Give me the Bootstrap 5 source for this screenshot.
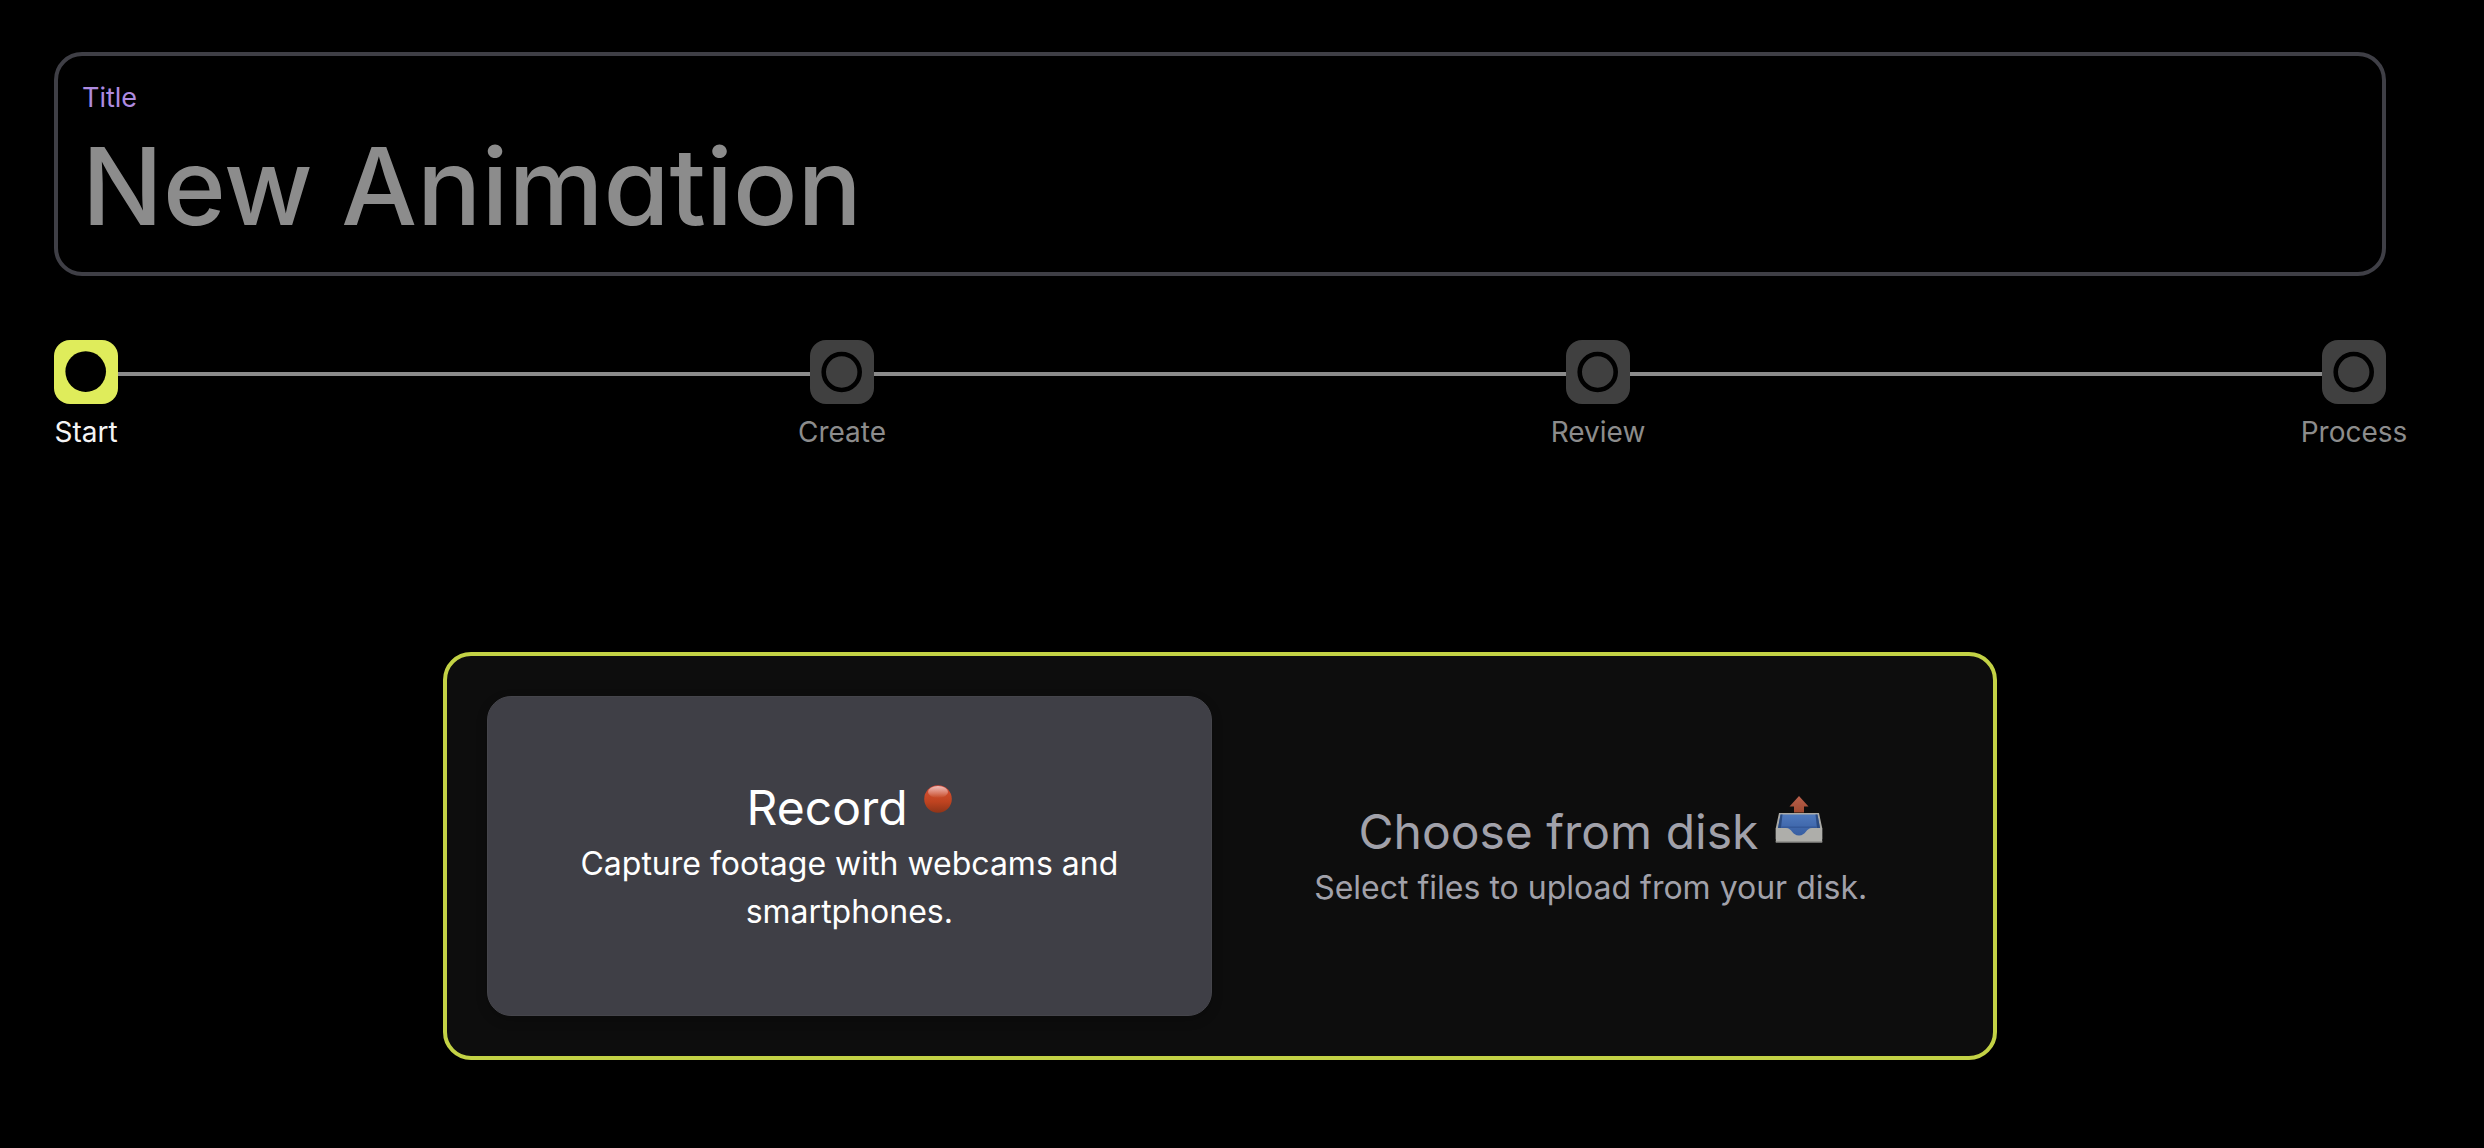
<!DOCTYPE html>
<html lang="en">
<head>
<meta charset="utf-8">
<meta name="viewport" content="width=device-width, initial-scale=1">
<title>New Animation</title>
<link href="https://cdn.jsdelivr.net/npm/bootstrap@5.3.0/dist/css/bootstrap.min.css" rel="stylesheet">
<style>
  body { background: #000; color: #fff; font-family: Inter, "Liberation Sans", sans-serif; font-size: 28px; line-height: 40px; }
  .page-wrap { padding: 52px 98px 88px 54px; }
  .title-field { border: 4px solid #3f3f46; border-radius: 28px; padding: 22px 24px 18px; }
  .title-field label { color: #ae8be0; font-size: 27px; }
  .title-input { display: block; width: 100%; border: 0; padding: 0; background: transparent; color: #fff; outline: 0; font-size: 107px; font-weight: 500; line-height: 136px; height: 136px; font-feature-settings: "cv11"; }
  .title-input::placeholder { color: #8c8c8c; opacity: 1; }
  .stepper { margin-top: 64px; }
  .step-item { width: 64px; gap: 8px; color: #8c8c8c; white-space: nowrap; }
  .step-item.current { color: #f4f4f5; }
  .step-box { width: 64px; height: 64px; border-radius: 16px; background: #404040; }
  .current .step-box { background: #dfec5b; }
  .step-line { height: 4px; margin-top: 32px; background: #8c8c8c; }
  .source-panel { margin-top: 200px; gap: 16px; padding: 40px; border: 4px solid #c3d245; border-radius: 28px; background: #0d0d0d; }
  .source-tab { flex: 1 1 0; height: 320px; padding: 0 80px; border: 1px solid transparent; border-radius: 24px; background: transparent; color: #a1a1aa; font-size: 32px; line-height: 48px; }
  .source-tab.selected { color: #fff; background: #3f3f46; border-color: #45454b; box-shadow: 0 4px 12px rgba(0, 0, 0, .2); }
  .source-name { font-size: 48px; line-height: 64px; }
  .source-icon { height: 48px; margin-top: -8px; margin-left: 3px; vertical-align: 6px; }
</style>
</head>
<body>
<main class="page-wrap">
  <div class="title-field">
    <label class="d-block" for="title">Title</label>
    <input class="title-input" id="title" type="text" placeholder="New Animation">
  </div>

  <nav class="stepper d-flex align-items-start" aria-label="Progress">
    <div class="step-item current d-flex flex-column align-items-center" aria-current="step">
      <svg class="step-box" viewBox="0 0 64 64" aria-hidden="true"><circle cx="31.7" cy="31.6" r="20.3"/></svg>
      <span>Start</span>
    </div>
    <div class="step-line flex-grow-1"></div>
    <div class="step-item d-flex flex-column align-items-center">
      <svg class="step-box" viewBox="0 0 64 64" aria-hidden="true"><circle cx="31.7" cy="32" r="18" fill="none" stroke="#000" stroke-width="4.6"/></svg>
      <span>Create</span>
    </div>
    <div class="step-line flex-grow-1"></div>
    <div class="step-item d-flex flex-column align-items-center">
      <svg class="step-box" viewBox="0 0 64 64" aria-hidden="true"><circle cx="31.7" cy="32" r="18" fill="none" stroke="#000" stroke-width="4.6"/></svg>
      <span>Review</span>
    </div>
    <div class="step-line flex-grow-1"></div>
    <div class="step-item d-flex flex-column align-items-center">
      <svg class="step-box" viewBox="0 0 64 64" aria-hidden="true"><circle cx="31.7" cy="32" r="18" fill="none" stroke="#000" stroke-width="4.6"/></svg>
      <span>Process</span>
    </div>
  </nav>

  <div class="source-panel col-8 mx-auto d-flex">
    <button type="button" class="source-tab selected" aria-pressed="true">
      <span class="source-name d-block">Record
        <svg class="source-icon" width="28" viewBox="2 0 28 48" aria-hidden="true">
          <defs>
            <linearGradient id="ball" x1="0" y1="0" x2="0" y2="1"><stop offset="0" stop-color="#d6493a"/><stop offset=".35" stop-color="#c94a29"/><stop offset=".6" stop-color="#bf4320"/><stop offset="1" stop-color="#8e3418"/></linearGradient>
            <linearGradient id="shine" x1="0" y1="0" x2="0" y2="1"><stop offset="0" stop-color="#fff" stop-opacity=".65"/><stop offset="1" stop-color="#fff" stop-opacity="0"/></linearGradient>
          </defs>
          <circle cx="16" cy="28" r="13.8" fill="url(#ball)"/>
          <ellipse cx="16" cy="21" rx="10" ry="6" fill="url(#shine)"/>
        </svg></span>
      <span class="d-block">Capture footage with webcams and smartphones.</span>
    </button>
    <button type="button" class="source-tab" aria-pressed="false">
      <span class="source-name d-block">Choose from disk
        <svg class="source-icon" width="48" viewBox="0 0 48 48" aria-hidden="true">
          <defs>
            <linearGradient id="inner" x1="0" y1="0" x2="0" y2="1"><stop offset="0" stop-color="#4f79bd"/><stop offset=".55" stop-color="#3f67ab"/><stop offset="1" stop-color="#365c9f"/></linearGradient>
            <linearGradient id="arrow" x1="0" y1="0" x2="0" y2="1"><stop offset="0" stop-color="#b9604c"/><stop offset="1" stop-color="#a14a31"/></linearGradient>
          </defs>
          <path d="M4 18H44L47.200 33V44H.8V33Z" fill="#a9a9a5"/>
          <path d="M5.500 19.500H42.500L45 33V43H3V33Z" fill="url(#inner)"/>
          <path d="M5.500 19.500L3 33H6L7.500 19.500ZM42.500 19.500L45 33H42L40.500 19.500Z" fill="#2a4a80"/>
          <path d="M6.200 31.500H41.800V33H6.200Z" fill="#34599a"/>
          <path d="M.8 33H11C17 33 17 40.500 24 40.500S31 33 37 33H47.200V47.500H.8Z" fill="#aeaeaa"/>
          <path d="M.8 46.700H47.200" stroke="#93938f" stroke-width="1.300"/>
          <path d="M24 1L33.500 11.500H29V17.500H19V11.500H14.500Z" fill="url(#arrow)"/>
        </svg></span>
      <span class="d-block">Select files to upload from your disk.</span>
    </button>
  </div>
</main>
<script src="https://cdn.jsdelivr.net/npm/bootstrap@5.3.0/dist/js/bootstrap.bundle.min.js"></script>
</body>
</html>
